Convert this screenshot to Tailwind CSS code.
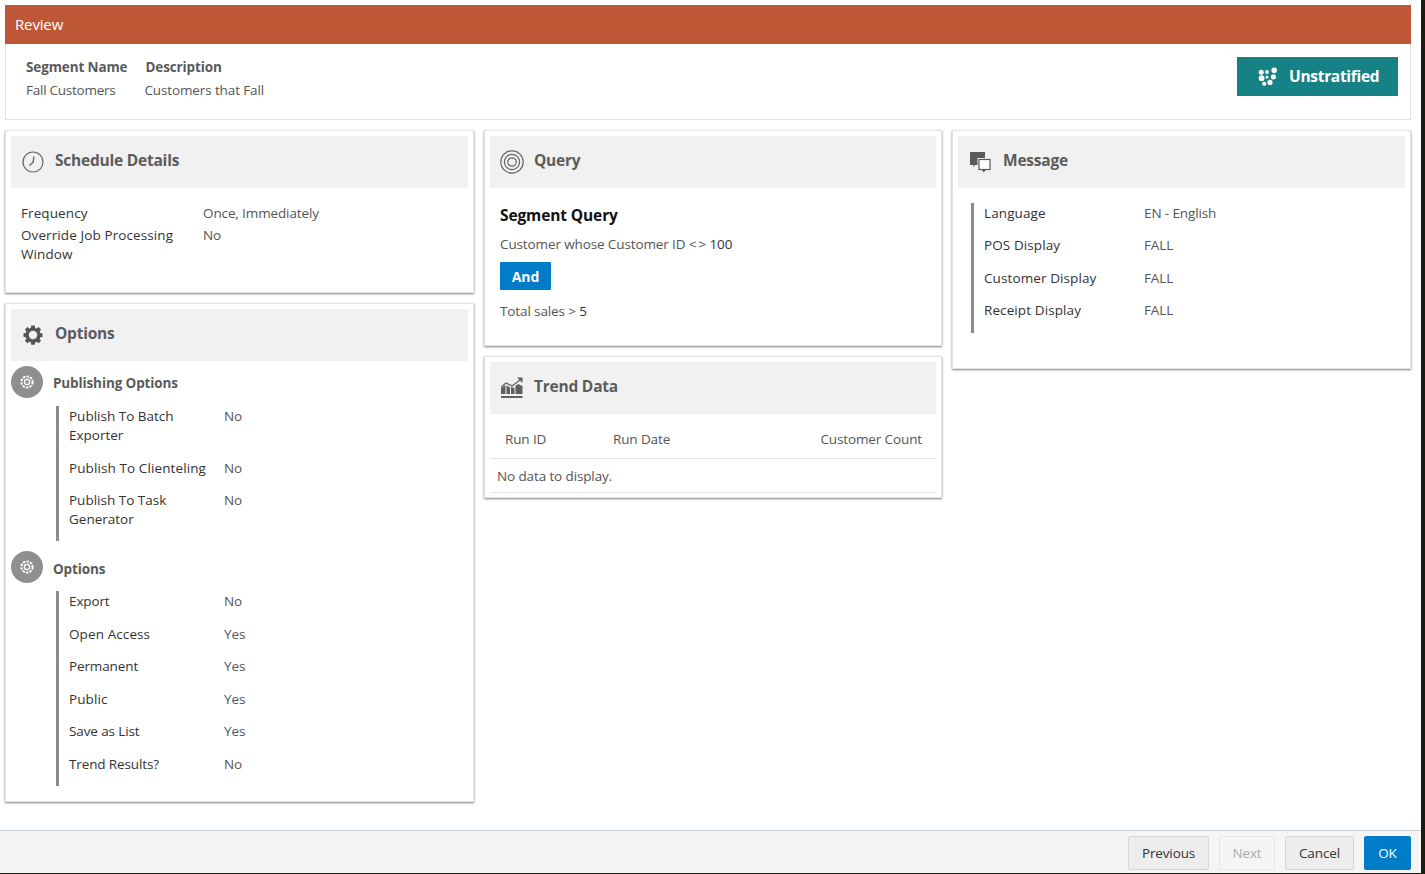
<!DOCTYPE html>
<html>
<head>
<meta charset="utf-8">
<script src="https://cdn.jsdelivr.net/npm/@tailwindcss/browser@4"></script>
</head>
<body class="m-0 overflow-hidden bg-[#1c1c10]">
<div class="w-[1421px] h-[873px] bg-white flex flex-col font-['Open_Sans',sans-serif] text-[13.5px] leading-[19px] tracking-[-0.12px] text-[#444]">
  <div class="flex-1 px-[5px] pt-[5px]">
    <div class="w-[1406px] h-[39px] bg-[#bd5736] text-white text-[15px] leading-[39px] pl-[10px] tracking-[-0.15px]">Review</div>
    <div class="w-[1406px] h-[76px] border border-t-0 border-[#dfe3e8] flex justify-between pt-[14px] pl-[20px] pr-[12px]">
      <div class="flex gap-[18px]">
        <div class="flex flex-col gap-[4px]"><span class="font-bold text-[#5a5a5a]">Segment Name</span><span class="text-[#555] tracking-[-0.25px]">Fall Customers</span></div>
        <div class="flex flex-col gap-[4px]"><span class="font-bold text-[#5a5a5a]">Description</span><span class="text-[#555] tracking-[-0.12px] -ml-[1px]">Customers that Fall</span></div>
      </div>
      <div class="-mt-[1px] w-[161px] h-[39px] bg-[#178286] text-white font-bold text-[15.5px] tracking-[-0.3px] flex items-center gap-[11px] pl-[21px]">
        <svg class="w-[20px] h-[20px]" viewBox="0 0 20 20" fill="#fff"><circle cx="3.2" cy="5.2" r="2.5"/><circle cx="9" cy="5" r="1.9"/><circle cx="16.2" cy="3.2" r="2.8"/><circle cx="3.6" cy="11.2" r="2.9"/><circle cx="9" cy="10" r="1.5"/><circle cx="15.4" cy="9.8" r="2.6"/><circle cx="6.2" cy="16.8" r="2.1"/><circle cx="12" cy="15.4" r="2.6"/></svg>
        <span>Unstratified</span>
      </div>
    </div>
    <div class="grid grid-cols-[469px_458px_459px] gap-x-[10px] mt-[10px] items-start">
      <div class="flex flex-col gap-[10px]">
        <section class="h-[163px] border border-[#e4e4e4] shadow-[0_1px_2px_rgba(0,0,0,0.5)] p-[5px]">
          <div class="h-[52px] bg-[#f1f1f1] flex items-center pl-[11px] gap-[11px] font-bold text-[15.5px] tracking-[-0.22px] text-[#5c5c5c]">
            <svg class="w-[22px] h-[22px]" viewBox="0 0 22 22" fill="none" stroke="#666" stroke-width="1.2"><circle cx="11" cy="11" r="10"/><path d="M12 5.5 L11 11.5 L7.5 14.5" stroke-width="1.4"/></svg>
            <span class="pb-[3px]">Schedule Details</span>
          </div>
          <div class="grid grid-cols-[182px_1fr] pl-[10px] pt-[16px] gap-y-[3px]">
            <span class="text-[#333] tracking-[0.1px]">Frequency</span><span class="text-[#555]">Once, Immediately</span>
            <span class="text-[#333] tracking-[0.1px] w-[160px]">Override Job Processing Window</span><span class="text-[#555]">No</span>
          </div>
        </section>
        <section class="h-[499px] border border-[#e4e4e4] shadow-[0_1px_2px_rgba(0,0,0,0.5)] p-[5px]">
          <div class="h-[52px] bg-[#f1f1f1] flex items-center pl-[11px] gap-[11px] font-bold text-[15.5px] tracking-[-0.22px] text-[#5c5c5c]">
            <svg class="w-[22px] h-[22px]" viewBox="0 0 24 24" fill="#555"><path fill-rule="evenodd" d="M9.6 1h4.8l.6 3.2 1.9.8 2.7-1.9 3.4 3.4-1.9 2.7.8 1.9 3.1.6v4.8l-3.1.6-.8 1.9 1.9 2.7-3.4 3.4-2.7-1.9-1.9.8-.6 3.1H9.6L9 23.9l-1.9-.8-2.7 1.9L1 21.6l1.9-2.7-.8-1.9L-1 16.4v-4.8l3.1-.6.8-1.9L1 6.4 4.4 3l2.7 1.9L9 4.2z" transform="translate(2.4 .9) scale(.8)"/><circle cx="12" cy="12" r="4.6" fill="#f1f1f1"/></svg>
            <span class="pb-[3px]">Options</span>
          </div>
          <div class="flex items-center gap-[10px] font-bold text-[#5a5a5a] h-[32px] mt-[5px]">
            <span class="w-[32px] h-[32px] rounded-full bg-[#8f8f8f] flex items-center justify-center">
              <svg class="w-[16px] h-[16px]" viewBox="0 0 16 16" fill="none" stroke="#fff" stroke-width="1.3"><circle cx="8" cy="8" r="2.6"/><circle cx="8" cy="8" r="5.6" stroke-dasharray="2.4 1.2" stroke-width="2"/></svg>
            </span>
            <span class="pt-[3px]">Publishing Options</span>
          </div>
          <div class="ml-[45px] mt-[8px] border-l-[3px] border-[#8a8c90] pl-[10px] pt-[1px] pb-[12px] grid grid-cols-[155px_1fr] gap-y-[13.5px] text-[#333]">
            <span class="w-[130px] tracking-[0px]">Publish To Batch Exporter</span><span class="text-[#555]">No</span>
            <span class="tracking-[0.1px]">Publish To Clienteling</span><span class="text-[#555]">No</span>
            <span class="w-[130px] tracking-[0px]">Publish To Task Generator</span><span class="text-[#555]">No</span>
          </div>
          <div class="flex items-center gap-[10px] font-bold text-[#5a5a5a] h-[32px] mt-[10px]">
            <span class="w-[32px] h-[32px] rounded-full bg-[#8f8f8f] flex items-center justify-center">
              <svg class="w-[16px] h-[16px]" viewBox="0 0 16 16" fill="none" stroke="#fff" stroke-width="1.3"><circle cx="8" cy="8" r="2.6"/><circle cx="8" cy="8" r="5.6" stroke-dasharray="2.4 1.2" stroke-width="2"/></svg>
            </span>
            <span class="pt-[4px]">Options</span>
          </div>
          <div class="ml-[45px] mt-[8px] border-l-[3px] border-[#8a8c90] pl-[10px] pt-[1px] pb-[12.5px] grid grid-cols-[155px_1fr] gap-y-[13.5px] text-[#333]">
            <span>Export</span><span class="text-[#555]">No</span>
            <span class="tracking-[0.1px]">Open Access</span><span class="text-[#555]">Yes</span>
            <span>Permanent</span><span class="text-[#555]">Yes</span>
            <span class="tracking-[0.1px]">Public</span><span class="text-[#555]">Yes</span>
            <span>Save as List</span><span class="text-[#555]">Yes</span>
            <span>Trend Results?</span><span class="text-[#555]">No</span>
          </div>
        </section>
      </div>
      <div class="flex flex-col gap-[10px]">
        <section class="h-[216px] border border-[#e4e4e4] shadow-[0_1px_2px_rgba(0,0,0,0.5)] p-[5px]">
          <div class="h-[52px] bg-[#f1f1f1] flex items-center pl-[10px] gap-[10px] font-bold text-[15.5px] tracking-[-0.22px] text-[#5c5c5c]">
            <svg class="w-[24px] h-[24px]" viewBox="0 0 24 24" fill="none" stroke="#666" stroke-width="1.2"><circle cx="12" cy="12" r="11.2"/><circle cx="12" cy="12" r="7.6"/><circle cx="12" cy="12" r="4.2"/></svg>
            <span class="pb-[3px]">Query</span>
          </div>
          <div class="pl-[10px] pt-[17px]">
            <div class="font-bold text-[15.5px] leading-[20px] text-[#111]">Segment Query</div>
            <div class="mt-[10px] text-[#555]">Customer whose Customer ID &lt;&thinsp;&gt;&nbsp;<span class="text-[#333]">100</span></div>
            <div class="mt-[8px] w-[51px] h-[28px] bg-[#007cc9] rounded-[1px] text-white font-bold text-[14px] flex items-center justify-center">And</div>
            <div class="mt-[12px] text-[#555]">Total sales &gt;&nbsp;<span class="text-[#333]">5</span></div>
          </div>
        </section>
        <section class="h-[142px] border border-[#e4e4e4] shadow-[0_1px_2px_rgba(0,0,0,0.5)] p-[5px]">
          <div class="h-[52px] bg-[#f1f1f1] flex items-center pl-[11px] gap-[11px] font-bold text-[15.5px] tracking-[-0.22px] text-[#5c5c5c]">
            <svg class="w-[22px] h-[22px]" viewBox="0 0 22 22" fill="#5f5f5f"><path d="M0 17V11L4.5 8V17ZM5.5 17V8.5L9 10.5V17ZM10 17V10L13.5 11V17ZM14.5 17V9L17 7L21.5 9V17ZM0 19H21.5V21H0Z"/><path d="M0 10L5 6L11 9L19 3" fill="none" stroke="#5f5f5f" stroke-width="1.2"/><path d="M16 0.5H21.5V6Z"/></svg>
            <span class="pb-[3px]">Trend Data</span>
          </div>
          <div class="h-[45px] border-b border-[#e5e5e5] flex items-center text-[#555] pl-[15px] pt-[7px]">
            <span class="w-[108px]">Run ID</span><span>Run Date</span><span class="ml-auto pr-[14px]">Customer Count</span>
          </div>
          <div class="h-[34px] border-b border-[#e5e5e5] flex items-center pl-[7px] pt-[2px] text-[#555]">No data to display.</div>
        </section>
      </div>
      <section class="h-[239px] border border-[#e4e4e4] shadow-[0_1px_2px_rgba(0,0,0,0.5)] p-[5px]">
        <div class="h-[52px] bg-[#f1f1f1] flex items-center pl-[11px] gap-[11px] font-bold text-[15.5px] tracking-[-0.22px] text-[#5c5c5c]">
          <svg class="w-[23px] h-[22px]" viewBox="0 0 23 22"><path d="M1 1H16V14H6L4.5 16.5V14H1Z" fill="#5a5a5a"/><rect x="10" y="8.5" width="11" height="10" fill="#fff" stroke="#f1f1f1" stroke-width="3"/><rect x="10" y="8.5" width="11" height="10" fill="#fff" stroke="#5a5a5a" stroke-width="1.2"/><path d="M13 19H17L14.5 21.5Z" fill="#5a5a5a"/></svg>
          <span class="pb-[3px]">Message</span>
        </div>
        <div class="ml-[13px] mt-[15px] border-l-[3px] border-[#8a8c90] pl-[10px] w-fit grid grid-cols-[160px_200px] gap-y-[13.5px] pt-[0.5px] pb-[13px] text-[#333]">
          <span class="tracking-[0.1px]">Language</span><span class="text-[#555]">EN - English</span>
          <span class="tracking-[0.1px]">POS Display</span><span class="text-[#555]">FALL</span>
          <span class="tracking-[0.1px]">Customer Display</span><span class="text-[#555]">FALL</span>
          <span class="tracking-[0.1px]">Receipt Display</span><span class="text-[#555]">FALL</span>
        </div>
      </section>
    </div>
  </div>
  <div class="h-[43px] border-t border-[#ccd2da] bg-[#f5f5f5] flex justify-end items-start gap-[10px] pt-[5px] pr-[10px]">
    <div class="w-[81px] h-[34px] bg-[#ededed] border border-[#d6d6d6] rounded-[2px] flex items-center justify-center text-[#333]">Previous</div>
    <div class="w-[56px] h-[34px] bg-[#f5f5f5] border border-[#e6e6e6] rounded-[2px] flex items-center justify-center text-[#aaa]">Next</div>
    <div class="w-[69px] h-[34px] bg-[#ededed] border border-[#d6d6d6] rounded-[2px] flex items-center justify-center text-[#333]">Cancel</div>
    <div class="w-[47px] h-[34px] bg-[#007cc9] rounded-[2px] flex items-center justify-center text-white">OK</div>
  </div>
</div>
</body>
</html>
